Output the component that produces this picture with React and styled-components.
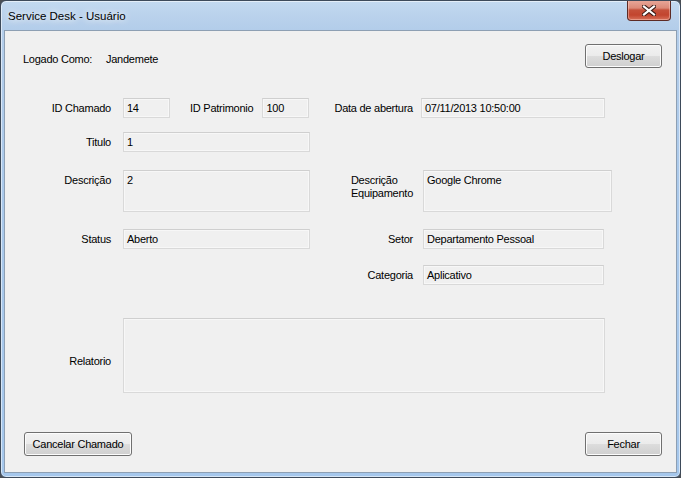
import React from "react";
import styled, { createGlobalStyle } from "styled-components";

const Global = createGlobalStyle`
  html, body { margin: 0; padding: 0; background: #4b4f55; }
  body { font-family: "Liberation Sans", Arial, sans-serif; }
  * { box-sizing: border-box; }
`;

const Window = styled.div`
  width: 681px;
  height: 478px;
  border: 1px solid #3d4a5a;
  border-radius: 6px;
  background: linear-gradient(to bottom, #c3d9f0 0px, #bad2ec 14px, #b3cdea 29px, #aac9eb 200px, #a5c7ec 100%);
  box-shadow: inset 0 0 0 1px rgba(255, 255, 255, 0.55);
  display: flex;
  flex-direction: column;
  overflow: hidden;
`;

const TitleBar = styled.div`
  height: 29px;
  display: flex;
  align-items: flex-start;
  padding-left: 7px;
`;

const Title = styled.div`
  font-family: "Liberation Sans", Arial, sans-serif;
  font-size: 11.5px;
  color: #000;
  line-height: 14px;
  margin-top: 8px;
  text-shadow: 0 0 6px rgba(255, 255, 255, 0.9), 0 0 10px rgba(255, 255, 255, 0.7);
`;

const CloseButton = styled.div`
  margin-left: auto;
  margin-right: 9px;
  margin-top: -1px;
  width: 44px;
  height: 21px;
  border: 1px solid #5d2a24;
  border-top: none;
  border-radius: 0 0 4px 4px;
  background: linear-gradient(to bottom, #e9a99b 0%, #dc8a78 40%, #c5503a 50%, #c2452e 75%, #d7705a 100%);
  box-shadow: inset 0 0 0 1px rgba(255, 210, 200, 0.45);
  display: flex;
  align-items: center;
  justify-content: center;
`;

const Client = styled.div`
  flex: 1;
  margin: 0 3px 4px 3px;
  border: 1px solid #8d9fb3;
  background: #f0f0f0;
  padding: 13px 14px 0 18px;
  display: flex;
  flex-direction: column;
  font-family: "Liberation Sans", Arial, sans-serif;
  font-size: 11px;
  letter-spacing: -0.25px;
  color: #000;
`;

const Header = styled.div`
  display: flex;
  align-items: flex-start;
  height: 24px;
`;

const HeaderText = styled.span`
  display: inline-block;
  width: ${(p) => p.$w || "auto"};
  margin-top: 9px;
  line-height: 13px;
`;

const Button = styled.div`
  width: ${(p) => p.$w}px;
  height: 24px;
  margin-left: ${(p) => (p.$push ? "auto" : "0")};
  border: 1px solid #707070;
  border-radius: 3px;
  background: linear-gradient(to bottom, #f2f2f2 0%, #ebebeb 50%, #dddddd 50%, #cfcfcf 100%);
  box-shadow: inset 0 0 0 1px #fcfcfc;
  display: flex;
  align-items: center;
  justify-content: center;
  line-height: 13px;
`;

const Row = styled.div`
  display: grid;
  grid-template-columns: 100px 187px 111px 191px;
  height: ${(p) => p.$h}px;
  margin-top: ${(p) => p.$mt}px;
`;

const Label = styled.div`
  justify-self: end;
  align-self: ${(p) => (p.$top ? "start" : "center")};
  padding-right: ${(p) => p.$pr ?? 12}px;
  padding-top: ${(p) => p.$pt || 0}px;
  line-height: 13px;
  text-align: left;
  white-space: pre-line;
`;

const Field = styled.div`
  width: ${(p) => p.$w}px;
  height: ${(p) => p.$h || 20}px;
  margin-left: ${(p) => p.$ml || 0}px;
  grid-column: ${(p) => p.$span || "auto"};
  border: 1px solid #d9d9d9;
  border-top-color: #cfcfcf;
  box-shadow: inset 0 0 0 1px #f7f7f7;
  background: #f0f0f0;
  padding: ${(p) => (p.$multi ? "3px 3px 0 3px" : "0 3px")};
  display: flex;
  align-items: ${(p) => (p.$multi ? "flex-start" : "center")};
  line-height: 13px;
  color: #000;
`;

const Cell = styled.div`
  display: flex;
  align-items: center;
  justify-content: ${(p) => p.$justify || "flex-start"};
  grid-column: ${(p) => p.$col || "auto"};
`;

const InlineLabel = styled.span`
  margin: 0 ${(p) => p.$mr}px 0 ${(p) => p.$ml}px;
  line-height: 13px;
`;

const Footer = styled.div`
  display: flex;
  margin-top: 39px;
  padding-left: 1px;
`;

function CloseGlyph() {
  return (
    <svg width="14" height="11" viewBox="0 0 14 11">
      <path
        d="M2 1.5 L12 9.5 M12 1.5 L2 9.5"
        stroke="#3a1b16"
        strokeWidth="4.2"
        strokeLinecap="square"
        fill="none"
      />
      <path
        d="M2 1.5 L12 9.5 M12 1.5 L2 9.5"
        stroke="#ffffff"
        strokeWidth="2.2"
        strokeLinecap="square"
        fill="none"
      />
    </svg>
  );
}

export default function App() {
  return (
    <>
      <Global />
      <Window>
        <TitleBar>
          <Title>Service Desk - Usuário</Title>
          <CloseButton>
            <CloseGlyph />
          </CloseButton>
        </TitleBar>
        <Client>
          <Header>
            <HeaderText $w="83px">Logado Como:</HeaderText>
            <HeaderText>Jandemete</HeaderText>
            <Button $w={77} $push>
              Deslogar
            </Button>
          </Header>

          <Row $h={20} $mt={30}>
            <Label>ID Chamado</Label>
            <Cell>
              <Field $w={47}>14</Field>
              <InlineLabel $ml={20} $mr={9}>
                ID Patrimonio
              </InlineLabel>
              <Field $w={47}>100</Field>
            </Cell>
            <Label $pr={8}>Data de abertura</Label>
            <Field $w={184}>07/11/2013 10:50:00</Field>
          </Row>

          <Row $h={20} $mt={14}>
            <Label>Titulo</Label>
            <Field $w={187}>1</Field>
          </Row>

          <Row $h={42} $mt={18}>
            <Label $top $pt={4}>
              Descrição
            </Label>
            <Field $w={187} $h={42} $multi>
              2
            </Field>
            <Label $top $pt={4} $pr={8}>
              {"Descrição\nEquipamento"}
            </Label>
            <Field $w={189} $h={42} $ml={2} $multi>
              Google Chrome
            </Field>
          </Row>

          <Row $h={20} $mt={17}>
            <Label>Status</Label>
            <Field $w={187}>Aberto</Field>
            <Label $pr={8}>Setor</Label>
            <Field $w={181} $ml={2}>
              Departamento Pessoal
            </Field>
          </Row>

          <Row $h={20} $mt={16}>
            <Cell $col="3" $justify="flex-end">
              <InlineLabel $ml={0} $mr={8}>
                Categoria
              </InlineLabel>
            </Cell>
            <Field $w={181} $ml={2}>
              Aplicativo
            </Field>
          </Row>

          <Row $h={75} $mt={33}>
            <Label $top $pt={37}>
              Relatorio
            </Label>
            <Field $w={482} $h={75} $span="2 / 5" $multi />
          </Row>

          <Footer>
            <Button $w={108}>Cancelar Chamado</Button>
            <Button $w={77} $push>
              Fechar
            </Button>
          </Footer>
        </Client>
      </Window>
    </>
  );
}
